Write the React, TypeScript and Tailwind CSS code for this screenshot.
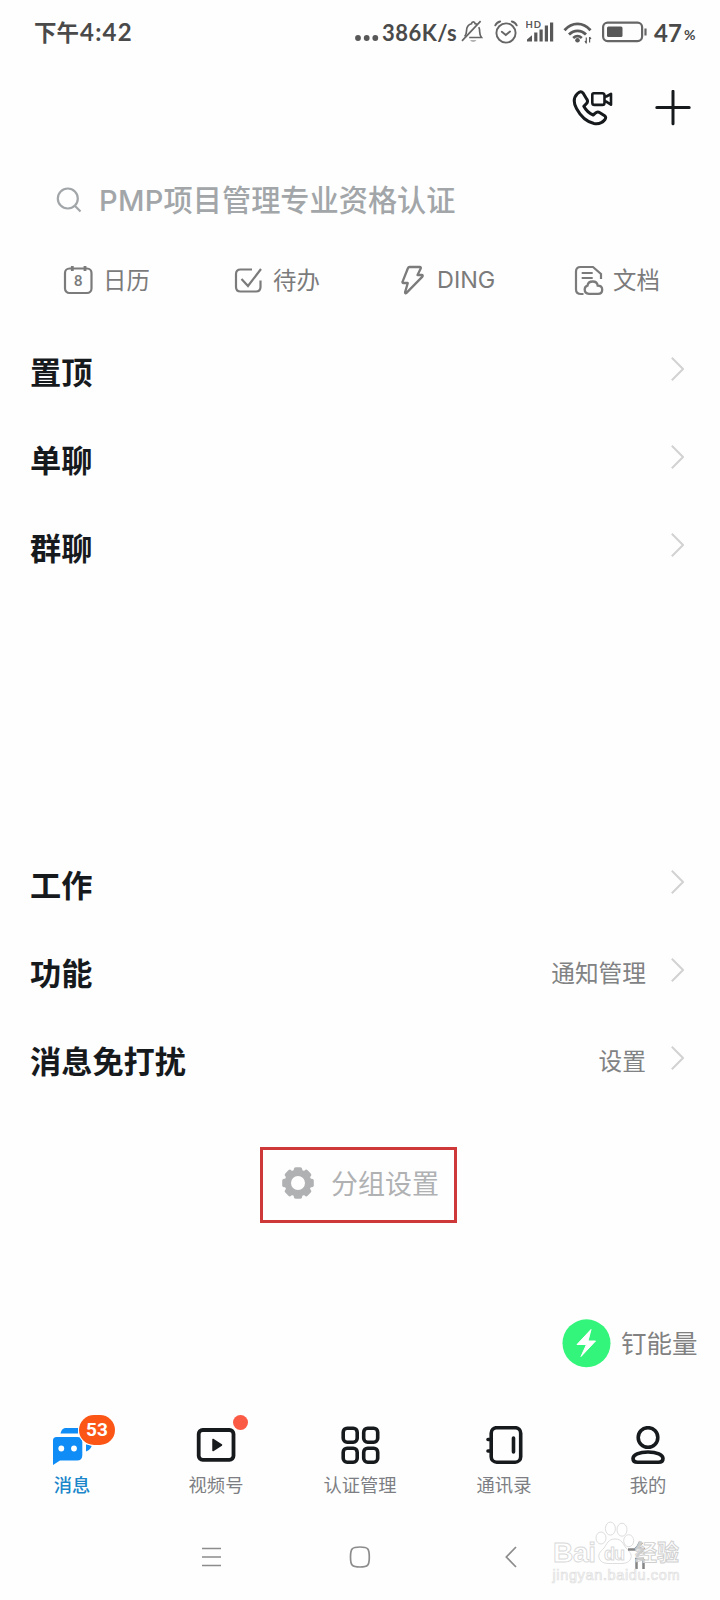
import type { ReactNode } from 'react';
import clsx from 'clsx';

function Chevron() {
  return (
    <svg width="13" height="24" viewBox="0 0 13 24" fill="none" stroke="#d2d2d3" strokeWidth="2" className="-mt-2">
      <path d="M0.8 0.8 12 12 0.8 23.2" />
    </svg>
  );
}

function StatusBar() {
  return (
    <header className="flex h-16 shrink-0 items-center pl-[34px] text-[#4a4a4a] font-bold">
      <div className="w-[320px] text-[22.500px] leading-none whitespace-nowrap">
        下午<span className="ml-px font-['Lato'] text-[24px] tracking-[1.200px]">4:42</span>
      </div>
      <svg width="25" height="8" viewBox="0 0 25 8" fill="#585858" className="mt-3">
        <circle cx="4" cy="4" r="2.9" />
        <circle cx="12.7" cy="4" r="2.9" />
        <circle cx="21.3" cy="4" r="2.9" />
      </svg>
      <span className="mt-px ml-[3px] w-[76px] font-['Lato'] text-[22px] leading-none tracking-[0.450px] whitespace-nowrap">386K/s</span>
      <svg width="24" height="24" viewBox="0 0 24 24" fill="none" stroke="#666" strokeWidth="1.7" className="ml-[3px]">
        <path d="M17.800 7.200c.7 1.300.9 2.800.9 4.800 0 2.800.6 3.800 1.800 5.500H8.200" />
        <path d="M3.700 16.500c1.200-1.700 1.800-3 1.800-5.500 0-4.300 1.900-6.500 5-7.300.2-1.300.8-1.800 1.800-1.800s1.600.5 1.800 1.800c1 .2 1.700.6 2.300 1.100" />
        <path d="M1 20.800 19.600 1.200" />
        <path d="M9 20.500a4 2.200 0 0 0 6.500 0z" fill="#666" stroke="none" />
      </svg>
      <svg width="24" height="24" viewBox="0 0 24 24" fill="none" stroke="#666" strokeWidth="1.9" strokeLinecap="round" className="ml-[9px]">
        <circle cx="12" cy="13" r="9.600" />
        <path d="m7.800 11.800 4 3.200 4.200-3.400M1.300 5.300C2.300 3.200 3.900 2 6.200 1.500M22.700 5.300c-1-2.100-2.600-3.300-4.900-3.800" />
      </svg>
      <svg width="28" height="24" viewBox="0 0 28 24" fill="#585858" className="ml-2">
        <text x="-0.500" y="7.800" fontFamily="Lato" fontSize="9.500" letterSpacing="1" fontWeight="700">HD</text>
        <path d="M1 21.500v-2l5-4.300v6.300zM8.200 12.600h3.200v8.900H8.200zM13.500 9.600h3.200v11.900h-3.200zM18.800 5.600H22v15.900h-3.200zM24 2.500h3.200v19H24z" />
      </svg>
      <svg width="30" height="24" viewBox="0 0 30 24" fill="none" stroke="#5c5c5c" strokeWidth="2.800" className="mt-0.5 ml-[9px]">
        <path d="M1.500 9.300C9 0.800 20 0.800 27.500 9.300M6 13.600c5-5 12-5 17 0M10.200 17c3-2.600 5.600-2.600 8.600 0" />
        <circle cx="14.500" cy="19.300" r="2.300" fill="#5c5c5c" stroke="none" />
        <path d="M23.300 16.500v6M26.600 16v5.600M22 20l1.300 2.300M28 18l-1.400-2" strokeWidth="1.200" />
      </svg>
      <svg width="46" height="22" viewBox="0 0 46 22" fill="none" className="ml-[9px]">
        <rect x="1.100" y="1.600" width="39" height="18.500" rx="4.500" stroke="#666" strokeWidth="2.200" />
        <rect x="5" y="5.500" width="15.500" height="10.500" rx="1.500" fill="#585858" />
        <path d="M43.500 7.500v7" stroke="#666" strokeWidth="2.200" />
      </svg>
      <span className="mt-px ml-[6px] w-[30px] font-['Lato'] text-[24px] leading-none">47</span>
      <span className="mt-1.5 font-['Lato'] text-[14px] leading-none">%</span>
    </header>
  );
}

function Toolbar() {
  return (
    <div className="flex h-[88px] shrink-0 items-center justify-end pr-[29px] pb-px">
      <svg width="42" height="38" viewBox="0 0 42 38" fill="none" stroke="#171a1d" strokeWidth="3" strokeLinejoin="round" strokeLinecap="round">
        <path d="M11.200 4.200C9.500 2.200 7.800 2.300 5.300 4.800 1.700 8.500 1.200 13.500 4.500 19.500c4 7.500 10.500 13.500 17.500 15 4.500.8 8.500-.8 11-4 1-1.500.8-2.800-.4-3.800l-4.700-3c-1.700-1-3.200-.8-4.600.5l-2.100 1.800c-4-1.600-7.300-4.800-9.400-8.700l2.400-2.400c1.600-1.500 1.600-3.200.6-4.700z" />
        <path d="M21.800 4.200h8.500c1.500 0 2.200.8 2.200 2.200v7.300c0 1.400-.7 2.200-2.200 2.200h-7.800c-1.500 0-2.200-.8-2.200-2.200v-8c0-1 .5-1.500 1.500-1.500zM32.500 7.500h1.800l4.700-2.700v11l-4.700-3.200h-1.800" strokeWidth="2.600" />
      </svg>
      <svg width="36" height="36" viewBox="0 0 36 36" stroke="#171a1d" strokeWidth="3" strokeLinecap="round" className="ml-[41px]">
        <path d="M18 1.300v32.400M1.800 17.500h32.400" />
      </svg>
    </div>
  );
}

function SearchBar() {
  return (
    <div className="flex h-24 shrink-0 items-center pl-14 text-[#a2a6a9]">
      <svg width="26" height="26" viewBox="0 0 26 26" fill="none" stroke="currentColor" strokeWidth="2.200">
        <circle cx="11.800" cy="11.500" r="10" />
        <path d="m18.800 18.800 5.700 5.700" />
      </svg>
      <span className="-mt-px ml-[17px] text-[29.200px] leading-none font-medium whitespace-nowrap">
        <span className="font-['Inter'] text-[29px] tracking-[0.300px]">PMP</span>项目管理专业资格认证
      </span>
    </div>
  );
}

function QuickAction({ label, className, children }: { label: string; className: string; children: ReactNode }) {
  return (
    <div className={clsx('flex items-center whitespace-nowrap', className)}>
      <svg width="32" height="32" viewBox="0 0 32 32" fill="none" stroke="currentColor" strokeWidth="2.200" className="mr-[9px] shrink-0">
        {children}
      </svg>
      <span className="text-[23.400px] leading-none">{label}</span>
    </div>
  );
}

function QuickActions() {
  return (
    <div className="flex h-16 shrink-0 items-center pl-[62px] text-[#7b7b7b]">
      <QuickAction label="日历" className="w-[170px]">
        <rect x="3" y="4.500" width="26.500" height="24.500" rx="4.500" />
        <path d="M10.300 2v5M23 2v5" strokeWidth="2.800" />
        <text x="16.300" y="22" fontFamily="Lato" fontSize="14.500" fontWeight="700" textAnchor="middle" fill="currentColor" stroke="none">8</text>
      </QuickAction>
      <QuickAction label="待办" className="w-[166px]">
        <path d="M20 5.500H8.500C5.500 5.500 4 7 4 10v13c0 3 1.500 4.500 4.500 4.500H24c3 0 4.500-1.500 4.500-4.500v-6.500M9.500 15l6.500 7L29 5" />
      </QuickAction>
      <QuickAction label="DING" className="-mr-0.5 w-[176px] gap-0 font-['Inter'] [&>span]:-ml-0.5">
        <path d="M11.500 3h10.300c1 0 1.300.7.900 1.500L19.500 11h4.300c1 0 1.200.9.600 1.600L8.500 28.900c-.8.700-1.700.3-1.400-.8l2.700-9.100H5.500c-.9 0-1.300-.6-.9-1.400l5.300-13.300c.3-.8.800-1.300 1.600-1.300z" strokeLinejoin="round" strokeWidth="2.300" />
      </QuickAction>
      <QuickAction label="文档" className="">
        <path d="M11.500 30H9c-3.300 0-5-1.500-5-4.500V7.500C4 4.500 5.500 3 8.500 3H21l8 7v5M9.700 9h11M9.700 14h11" />
        <path d="M17 29.800c-2.700 0-4.300-1.800-4.300-4.200 0-2 1.100-3.400 2.800-3.900.3-2.500 2.300-4.200 5.200-4.200 2.600 0 4.700 1.700 5 4.200 2.600 0 4.500 1.500 4.500 4s-1.700 4.100-4.200 4.100z" strokeWidth="2.300" />
      </QuickAction>
    </div>
  );
}

const topGroups = [{ title: '置顶' }, { title: '单聊' }, { title: '群聊' }];

const bottomGroups = [
  { title: '工作' },
  { title: '功能', action: '通知管理' },
  { title: '消息免打扰', action: '设置' },
];

function GroupRow({ title, action }: { title: string; action?: string }) {
  return (
    <li className="flex h-[88px] items-center pr-9 pl-[30px]">
      <h2 className="-mt-1 flex-1 text-[31.200px] leading-none font-bold text-[#171a1d]">{title}</h2>
      {action && <span className="-mt-0.5 mr-[25px] text-[23.700px] leading-none text-[#818283]">{action}</span>}
      <Chevron />
    </li>
  );
}

const gearTeeth = [0, 45, 90, 135, 180, 225, 270, 315];

function GroupSettings() {
  return (
    <button className="ml-[260px] flex h-[76px] w-[197px] items-center border-[3px] border-[#cf3838] pl-[18px] text-[#b0b1b3]">
      <svg width="34" height="34" viewBox="-17 -17 34 34" fill="currentColor" className="-mt-[5px] shrink-0">
        <circle r="10.200" fill="none" stroke="currentColor" strokeWidth="6.400" />
        {gearTeeth.map((angle) => (
          <rect key={angle} x="-4.200" y="-15.800" width="8.400" height="6" rx="2" transform={`rotate(${angle})`} />
        ))}
      </svg>
      <span className="-mt-1.5 ml-[16px] text-[27px] leading-none whitespace-nowrap">分组设置</span>
    </button>
  );
}

function EnergyButton() {
  return (
    <div className="flex items-center pl-[562px]">
      <svg width="49" height="49" viewBox="0 0 49 49">
        <circle cx="24.500" cy="24.300" r="24" fill="#34f57b" />
        <path d="M29 10.500 15 25.500h9.500L19 37.500 33.500 22H26z" fill="#fff" strokeLinejoin="round" stroke="#fff" />
      </svg>
      <span className="-mt-[3px] ml-[10px] text-[25.500px] leading-none text-[#818181]">钉能量</span>
    </div>
  );
}

const tabs = [
  {
    label: '消息',
    icon: (
      <>
        <path d="M8.500 7.500c1-3.800 2.500-5.500 6-5.500H26v5.500z" fill="#0f8cf5" stroke="none" />
        <path d="M5 11h20c3.500 0 5.300 1.800 5.300 5.300v13c0 3.500-1.800 5.200-5.300 5.200H8L1 39V14.500C1 12.200 2.200 11 4.500 11z" fill="#0f8cf5" stroke="none" />
        <path d="M34 18.500h4c1.800 0 2 1.500 1 3-1.200 2-2.700 3.300-5 4z" fill="#0f8cf5" stroke="none" />
        <circle cx="9.300" cy="22.500" r="2.900" fill="#fff" stroke="none" />
        <circle cx="22" cy="22.500" r="2.900" fill="#fff" stroke="none" />
      </>
    ),
  },
  {
    label: '视频号',
    icon: (
      <>
        <rect x="2.700" y="4" width="34.800" height="29.800" rx="4" strokeWidth="3.800" />
        <path d="M17 13.500v11l8.500-5.500z" fill="#171a1d" strokeWidth="1.500" strokeLinejoin="round" />
      </>
    ),
  },
  {
    label: '认证管理',
    icon: (
      <>
        <rect x="3.200" y="2.200" width="14" height="14" rx="4" />
        <rect x="23.700" y="2.200" width="14" height="14" rx="4" />
        <rect x="3.200" y="22.200" width="14" height="14" rx="4" />
        <rect x="23.700" y="22.200" width="14" height="14" rx="4" />
      </>
    ),
  },
  {
    label: '通讯录',
    icon: (
      <>
        <rect x="7.200" y="1.700" width="29.500" height="34.500" rx="5.500" />
        <path d="M4 13.500h3M4 25h3M29.500 12v14" strokeLinecap="round" />
      </>
    ),
  },
  {
    label: '我的',
    icon: (
      <>
        <circle cx="20" cy="11.500" r="9.800" />
        <path d="M20 26c-9 0-15 2.800-15 6.500C5 35 6.500 36.200 9.500 36.200h21c3 0 4.500-1.200 4.500-3.700C35 28.800 29 26 20 26z" />
      </>
    ),
  },
];

function TabBar() {
  return (
    <nav className="flex h-[98px] shrink-0">
      {tabs.map((tab, i) => (
        <div key={tab.label} className="relative flex w-36 flex-col items-center pt-[12px]">
          <svg width="41" height="40" viewBox="0 0 41 40" fill="none" stroke="#171a1d" strokeWidth="3.600">
            {tab.icon}
          </svg>
          <span
            className={clsx(
              'mt-[9px] text-[18.300px] leading-none whitespace-nowrap',
              i === 0 ? 'font-medium text-[#1b86ca]' : 'text-[#7d7e83]'
            )}
          >
            {tab.label}
          </span>
          {i === 0 && (
            <span className="absolute top-px left-[79px] flex h-[30px] w-[36px] items-center justify-center rounded-full bg-[#fb5616] font-['Roboto'] text-[19px] font-bold text-white ring-1 ring-white">
              53
            </span>
          )}
          {i === 1 && <span className="absolute top-px left-[89px] size-[15px] rounded-full bg-[#fb5a45]" />}
        </div>
      ))}
    </nav>
  );
}

function SystemNav() {
  return (
    <footer className="relative flex h-[88px] shrink-0 items-center pl-[202px]">
      <svg width="19" height="22" viewBox="0 0 19 22" stroke="#8c8c8c" strokeWidth="1.700" className="mt-0.5">
        <path d="M0 2.500h19M0 11h19M0 19.500h19" />
      </svg>
      <svg width="22" height="22" viewBox="0 0 22 22" fill="none" stroke="#8c8c8c" strokeWidth="1.700" className="mt-px ml-[128px]">
        <path d="M11 1c8 0 9.300 1.500 9.300 10S19 21 11 21 1.500 19.500 1.500 11 3 1 11 1z" />
      </svg>
      <svg width="12" height="22" viewBox="0 0 12 22" fill="none" stroke="#8c8c8c" strokeWidth="1.700" className="mt-px ml-[134px]">
        <path d="M11 1 1.300 11 11 21" />
      </svg>
      <svg width="134" height="72" viewBox="0 0 134 72" className="absolute top-[4px] left-[550px]" fill="#fff" stroke="#d9d9d9" strokeWidth="0.900">
        <text x="3" y="46" fontFamily="Liberation Sans" fontSize="28" fontWeight="700" textLength="43">Bai</text>
        <ellipse cx="51" cy="22" rx="5" ry="6" />
        <ellipse cx="60.400" cy="12.600" rx="5" ry="6.500" />
        <ellipse cx="72" cy="13.700" rx="5" ry="6.500" />
        <ellipse cx="78.700" cy="24.700" rx="5" ry="6" />
        <path d="M65 23c7 0 8 5 11 9 4 4 7 7 4 12-3 4-8 3.500-15 3.500S53 48 50 44c-3-5 0-8 4-12 3-4 4-9 11-9z" />
        <text x="54" y="44" fontFamily="Liberation Sans" fontSize="18" fontWeight="700" textLength="21">du</text>
        <path d="M78 33.500h7l7-7M85 43h9M86.500 43v10M93.500 43v10M90 26l-3 6 6 1-6 7" fill="none" stroke="#858585" strokeWidth="2.500" />
        <text x="85" y="44" fontFamily="Noto Sans CJK SC" fontSize="22" fontWeight="700" fillOpacity="0.600" stroke="#cfcfcf">经验</text>
        <text x="2.500" y="63.500" fontFamily="Liberation Sans" fontSize="14.500" strokeWidth="0.700" stroke="#dedede" textLength="127">jingyan.baidu.com</text>
      </svg>
    </footer>
  );
}

export default function App() {
  return (
    <main className="flex h-[1600px] w-[720px] flex-col overflow-hidden bg-[#fefefe] font-['Noto_Sans_CJK_SC',sans-serif]">
      <StatusBar />
      <Toolbar />
      <SearchBar />
      <QuickActions />
      <ul className="mt-[17px]">
        {topGroups.map((group) => (
          <GroupRow key={group.title} {...group} />
        ))}
      </ul>
      <ul className="mt-[249px]">
        {bottomGroups.map((group) => (
          <GroupRow key={group.title} {...group} />
        ))}
      </ul>
      <div className="mt-[41px] h-[76px] shrink-0">
        <GroupSettings />
      </div>
      <div className="mt-[96px] h-[95px] shrink-0">
        <EnergyButton />
      </div>
      <TabBar />
      <SystemNav />
    </main>
  );
}
